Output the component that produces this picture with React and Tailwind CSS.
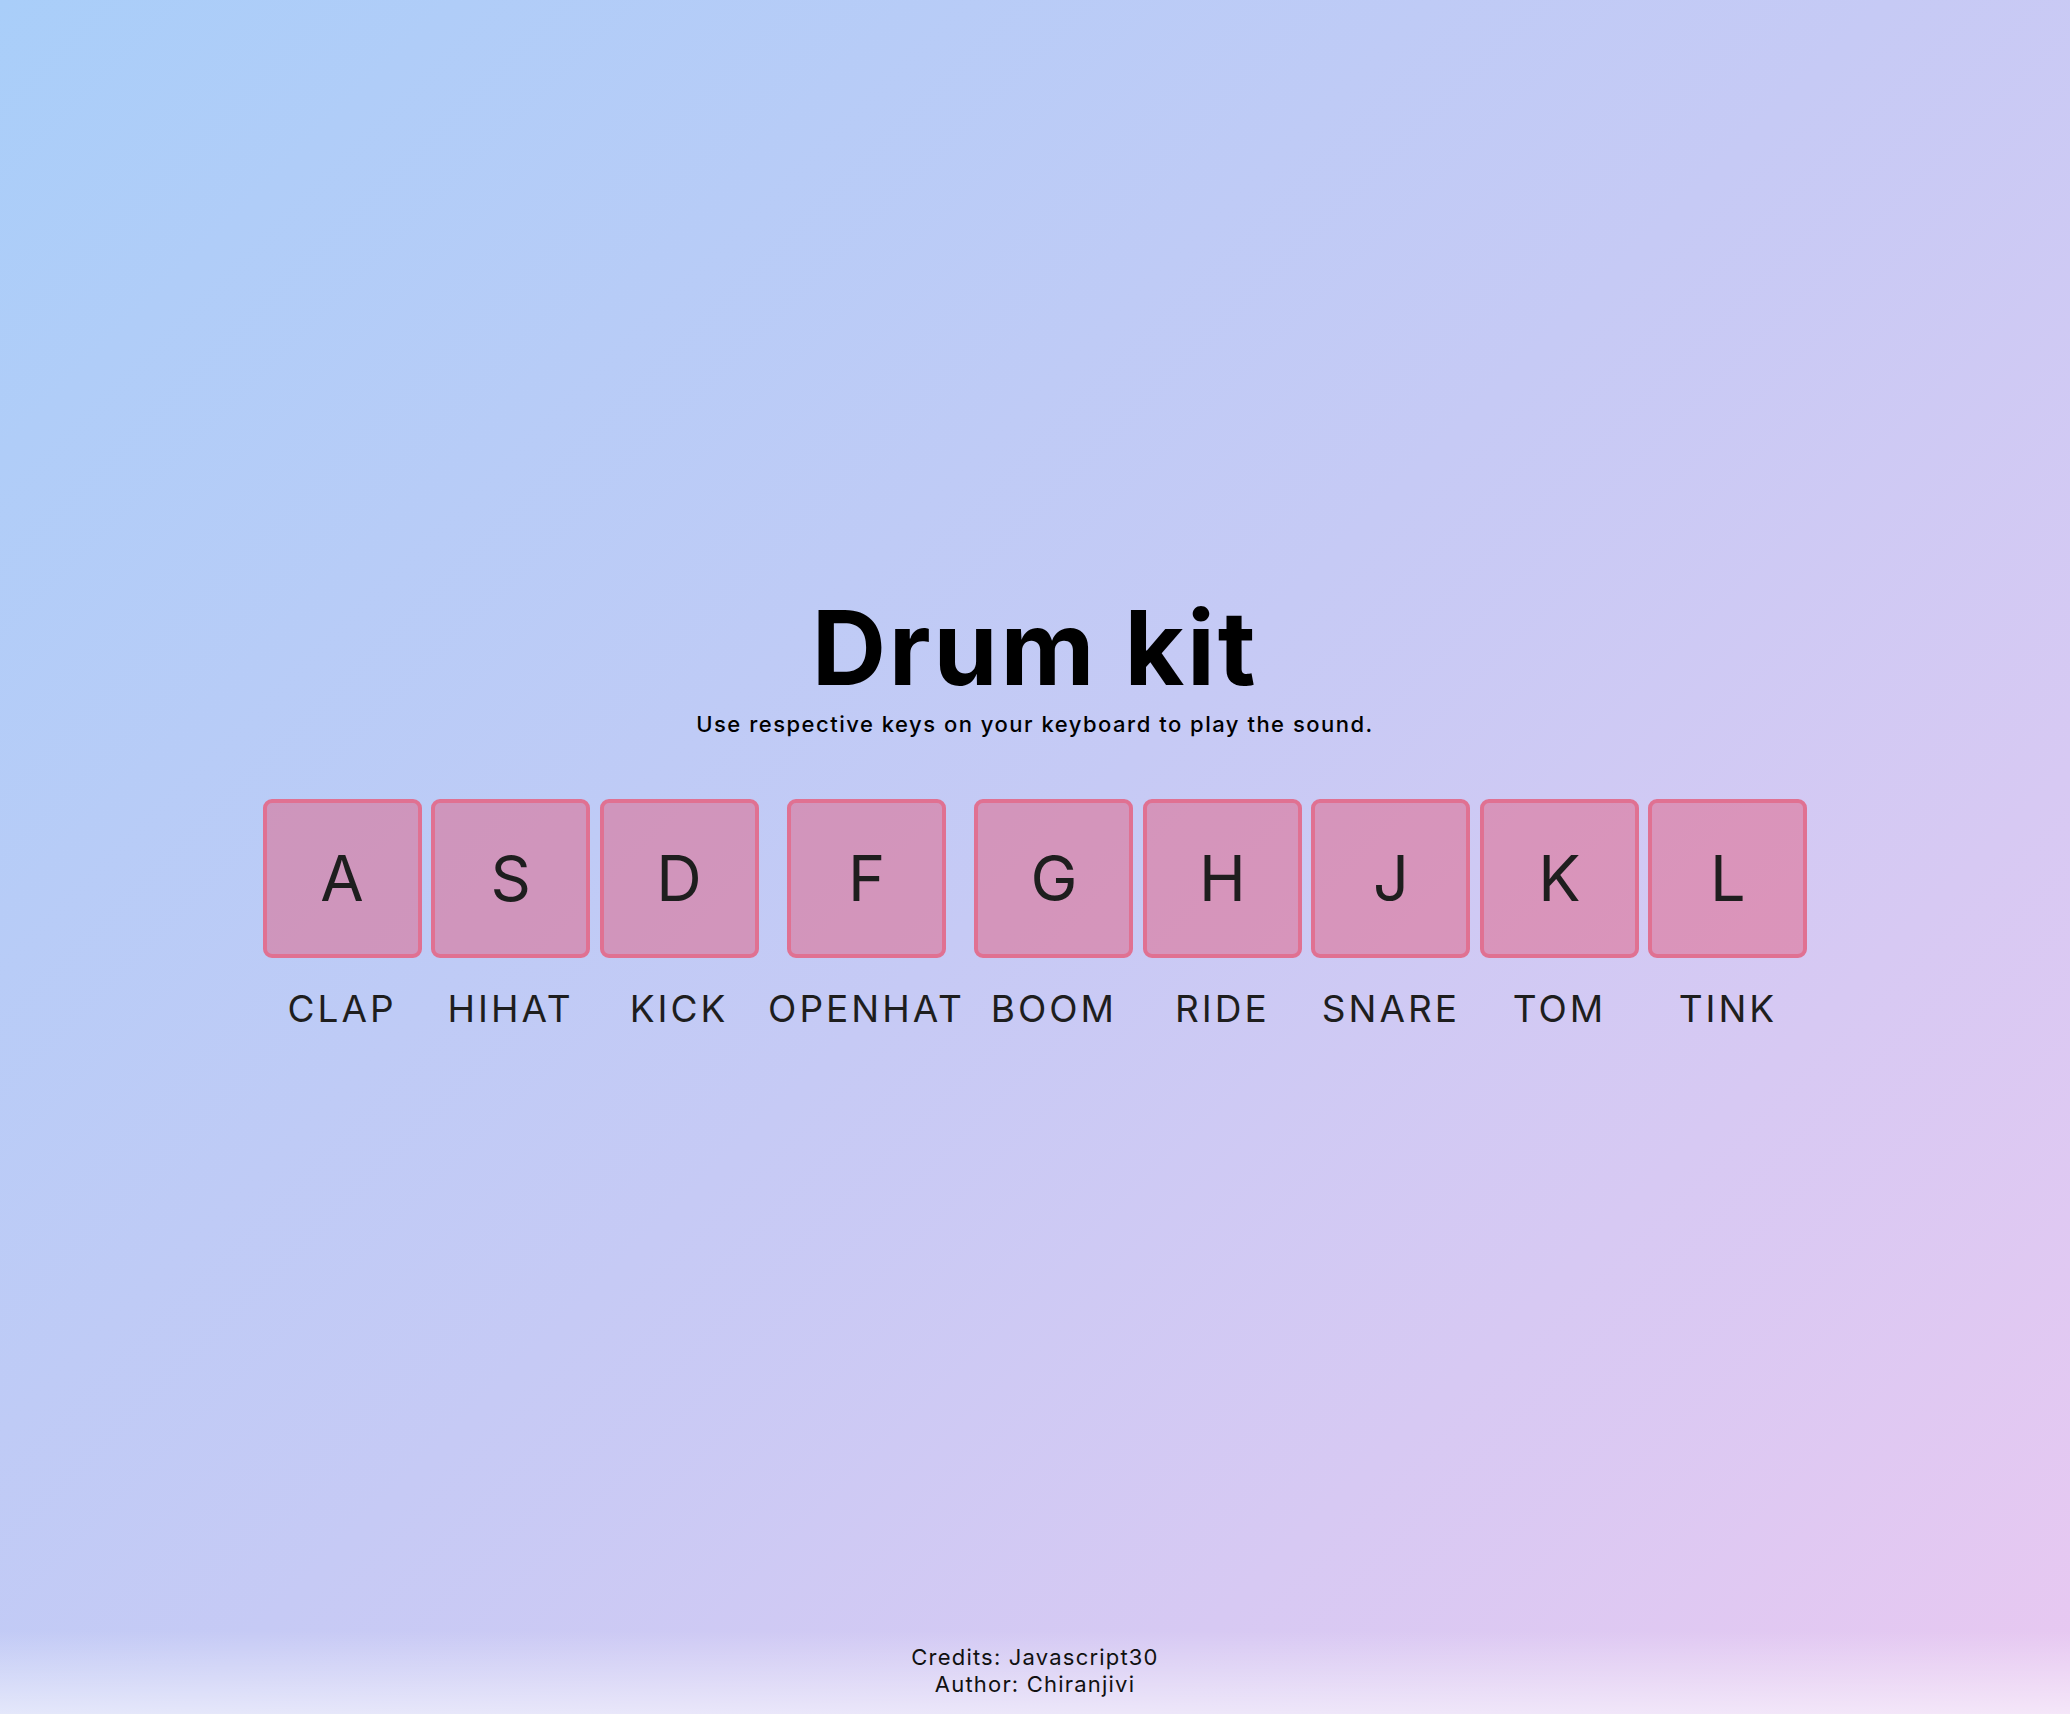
import React from "react";

const keys = [
  ["A", "CLAP"],
  ["S", "HIHAT"],
  ["D", "KICK"],
  ["F", "OPENHAT"],
  ["G", "BOOM"],
  ["H", "RIDE"],
  ["J", "SNARE"],
  ["K", "TOM"],
  ["L", "TINK"],
];

export default function App() {
  return (
    <div
      className="min-h-screen flex flex-col bg-[linear-gradient(135deg,#a9cef9_0%,#c6caf5_50%,#e8c8f1_100%)] text-[#1e1e1e]"
      style={{ fontFamily: "Inter, 'Noto Sans', sans-serif" }}
    >
      <main className="flex-1 flex flex-col items-center justify-center pb-[4px]">
        <h1 className="text-[103px] font-bold leading-none text-black tracking-[2.8px]">Drum kit</h1>
        <p className="mt-[14px] text-[22px] font-medium text-black leading-none tracking-[1.5px]">
          Use respective keys on your keyboard to play the sound.
        </p>
        <div className="mt-[64px] flex flex-row items-start justify-center gap-[9.5px]">
          {keys.map(([k, label]) => (
            <div key={k} className="flex flex-col items-center">
              <div className="w-[159px] h-[159px] border-4 border-[#e07192] rounded-[9px] bg-[rgba(225,95,130,0.5)] flex items-center justify-center">
                <span className="text-[63px] leading-none font-normal text-[#1e1e1e]">{k}</span>
              </div>
              <div className="mt-[28px] text-[37px] leading-[46px] tracking-[3px] text-[#1e1e1e] whitespace-nowrap">
                {label}
              </div>
            </div>
          ))}
        </div>
      </main>
      <footer className="h-[83px] pt-[13px] flex flex-col items-center bg-[linear-gradient(to_bottom,rgba(255,255,255,0)_0%,rgba(255,255,255,0.55)_100%)] text-[22px] leading-[27px] tracking-[1.2px] text-[#111]">
        <div>Credits: Javascript30</div>
        <div>Author: Chiranjivi</div>
      </footer>
    </div>
  );
}
